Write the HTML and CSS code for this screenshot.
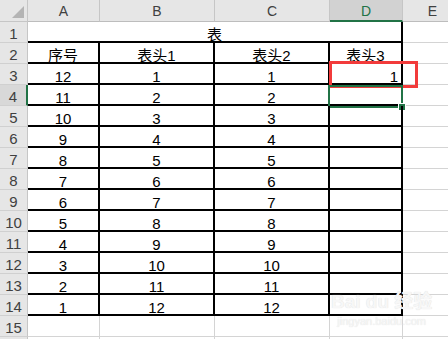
FILE: index.html
```html
<!DOCTYPE html>
<html lang="zh-CN">
<head>
  <meta charset="UTF-8">
  <title>表</title>
  <link rel="stylesheet" href="styles.css">
</head>
<body>
  <div class="sheet">
    <div class="corner"><span class="tri"></span></div>
    <div class="col">A</div>
    <div class="col">B</div>
    <div class="col">C</div>
    <div class="col active">D</div>
    <div class="col">E</div>

    <div class="rh">1</div>
    <div class="cell title">表</div>
    <div class="cell grid"></div>

    <div class="rh">2</div>
    <div class="cell bx">序号</div>
    <div class="cell bx">表头1</div>
    <div class="cell bx">表头2</div>
    <div class="cell bx">表头3</div>
    <div class="cell grid"></div>

    <div class="rh">3</div>
    <div class="cell bx">12</div>
    <div class="cell bx">1</div>
    <div class="cell bx">1</div>
    <div class="cell bx right">1<span class="mark"></span></div>
    <div class="cell grid"></div>

    <div class="rh sel-row">4</div>
    <div class="cell bx">11</div>
    <div class="cell bx">2</div>
    <div class="cell bx">2</div>
    <div class="cell bx"><span class="cursor"><i class="handle"></i></span></div>
    <div class="cell grid"></div>

    <div class="rh">5</div>
    <div class="cell bx">10</div>
    <div class="cell bx">3</div>
    <div class="cell bx">3</div>
    <div class="cell bx"></div>
    <div class="cell grid"></div>

    <div class="rh">6</div>
    <div class="cell bx">9</div>
    <div class="cell bx">4</div>
    <div class="cell bx">4</div>
    <div class="cell bx"></div>
    <div class="cell grid"></div>

    <div class="rh">7</div>
    <div class="cell bx">8</div>
    <div class="cell bx">5</div>
    <div class="cell bx">5</div>
    <div class="cell bx"></div>
    <div class="cell grid"></div>

    <div class="rh">8</div>
    <div class="cell bx">7</div>
    <div class="cell bx">6</div>
    <div class="cell bx">6</div>
    <div class="cell bx"></div>
    <div class="cell grid"></div>

    <div class="rh">9</div>
    <div class="cell bx">6</div>
    <div class="cell bx">7</div>
    <div class="cell bx">7</div>
    <div class="cell bx"></div>
    <div class="cell grid"></div>

    <div class="rh">10</div>
    <div class="cell bx">5</div>
    <div class="cell bx">8</div>
    <div class="cell bx">8</div>
    <div class="cell bx"></div>
    <div class="cell grid"></div>

    <div class="rh">11</div>
    <div class="cell bx">4</div>
    <div class="cell bx">9</div>
    <div class="cell bx">9</div>
    <div class="cell bx"></div>
    <div class="cell grid"></div>

    <div class="rh">12</div>
    <div class="cell bx">3</div>
    <div class="cell bx">10</div>
    <div class="cell bx">10</div>
    <div class="cell bx"></div>
    <div class="cell grid"></div>

    <div class="rh">13</div>
    <div class="cell bx">2</div>
    <div class="cell bx">11</div>
    <div class="cell bx">11</div>
    <div class="cell bx"></div>
    <div class="cell grid"></div>

    <div class="rh">14</div>
    <div class="cell bx">1</div>
    <div class="cell bx">12</div>
    <div class="cell bx">12</div>
    <div class="cell bx"></div>
    <div class="cell grid"></div>

    <div class="rh">15</div>
    <div class="cell grid"></div>
    <div class="cell grid"></div>
    <div class="cell grid"></div>
    <div class="cell grid"></div>
    <div class="cell grid"></div>

    <div class="rh"></div>
    <div class="cell grid"></div>
    <div class="cell grid"></div>
    <div class="cell grid"></div>
    <div class="cell grid"></div>
    <div class="cell grid"></div>

    <div class="watermark">
      <span class="wm-logo">Bai du 经验</span>
      <span class="wm-url">jingyan.baidu.com</span>
    </div>
  </div>
</body>
</html>
```

FILE: styles.css
```css
body {
  margin: 0;
  background: #fff;
  font-family: "Liberation Sans", "Noto Sans CJK SC", sans-serif;
  overflow: hidden;
}

.sheet {
  position: relative;
  display: grid;
  grid-template-columns: 28px 72px 115px 115px 73px 60px;
  grid-template-rows: 22px repeat(16, 21px);
}

.sheet > div {
  box-sizing: border-box;
}

/* headers */
.corner {
  position: relative;
  background: #e6e6e6;
  border-right: 1px solid #c6c6c6;
  border-bottom: 1px solid #c6c6c6;
}

.tri {
  position: absolute;
  right: 3px;
  bottom: 3px;
  width: 0;
  height: 0;
  border-left: 12px solid transparent;
  border-bottom: 12px solid #b4b4b4;
}

.col {
  background: #e6e6e6;
  border-right: 1px solid #c6c6c6;
  border-bottom: 1px solid #bdbdbd;
  color: #404040;
  font-size: 14px;
  text-align: center;
  line-height: 22px;
}

.col.active {
  background: #d2d2d2;
  color: #217346;
  border-bottom: 2px solid #217346;
}

.rh {
  background: #e6e6e6;
  border-right: 1px solid #c6c6c6;
  border-bottom: 1px solid #d0d0d0;
  color: #404040;
  font-size: 15px;
  text-align: center;
  line-height: 21px;
  padding-top: 1px;
}

.rh.sel-row {
  background: #d8d8d8;
  border-right: 2px solid #217346;
}

/* cells */
.cell {
  font-size: 15px;
  line-height: 21px;
  padding-top: 2px;
  text-align: center;
  color: #000;
  white-space: nowrap;
}

.grid {
  border-right: 1px solid #d4d4d4;
  border-bottom: 1px solid #d4d4d4;
}

.title {
  grid-column: span 4;
  border-right: 2px solid #000;
  border-bottom: 2px solid #000;
}

.bx {
  position: relative;
  border-right: 2px solid #000;
  border-bottom: 2px solid #000;
}

.right {
  text-align: right;
  padding-right: 3px;
}

/* annotations over the grid */
.mark {
  position: absolute;
  left: -1px;
  top: -3px;
  width: 89px;
  height: 27px;
  box-sizing: border-box;
  border: 3px solid #f23b3b;
}

.cursor {
  position: absolute;
  left: -2px;
  top: 0;
  width: 75px;
  height: 23px;
  box-sizing: border-box;
  border: 2px solid #217346;
}

.handle {
  position: absolute;
  right: -5px;
  bottom: -5px;
  width: 6px;
  height: 6px;
  background: #217346;
  border: 1px solid #fff;
}

.watermark {
  position: absolute;
  left: 331px;
  top: 290px;
  display: flex;
  flex-direction: column;
  align-items: center;
  color: #f7f7f7;
  text-shadow: 0 0 1px #d8d8d8;
  pointer-events: none;
}

.wm-logo {
  font-size: 19px;
  font-weight: bold;
  line-height: 24px;
}

.wm-url {
  font-size: 11px;
  line-height: 14px;
}
```
